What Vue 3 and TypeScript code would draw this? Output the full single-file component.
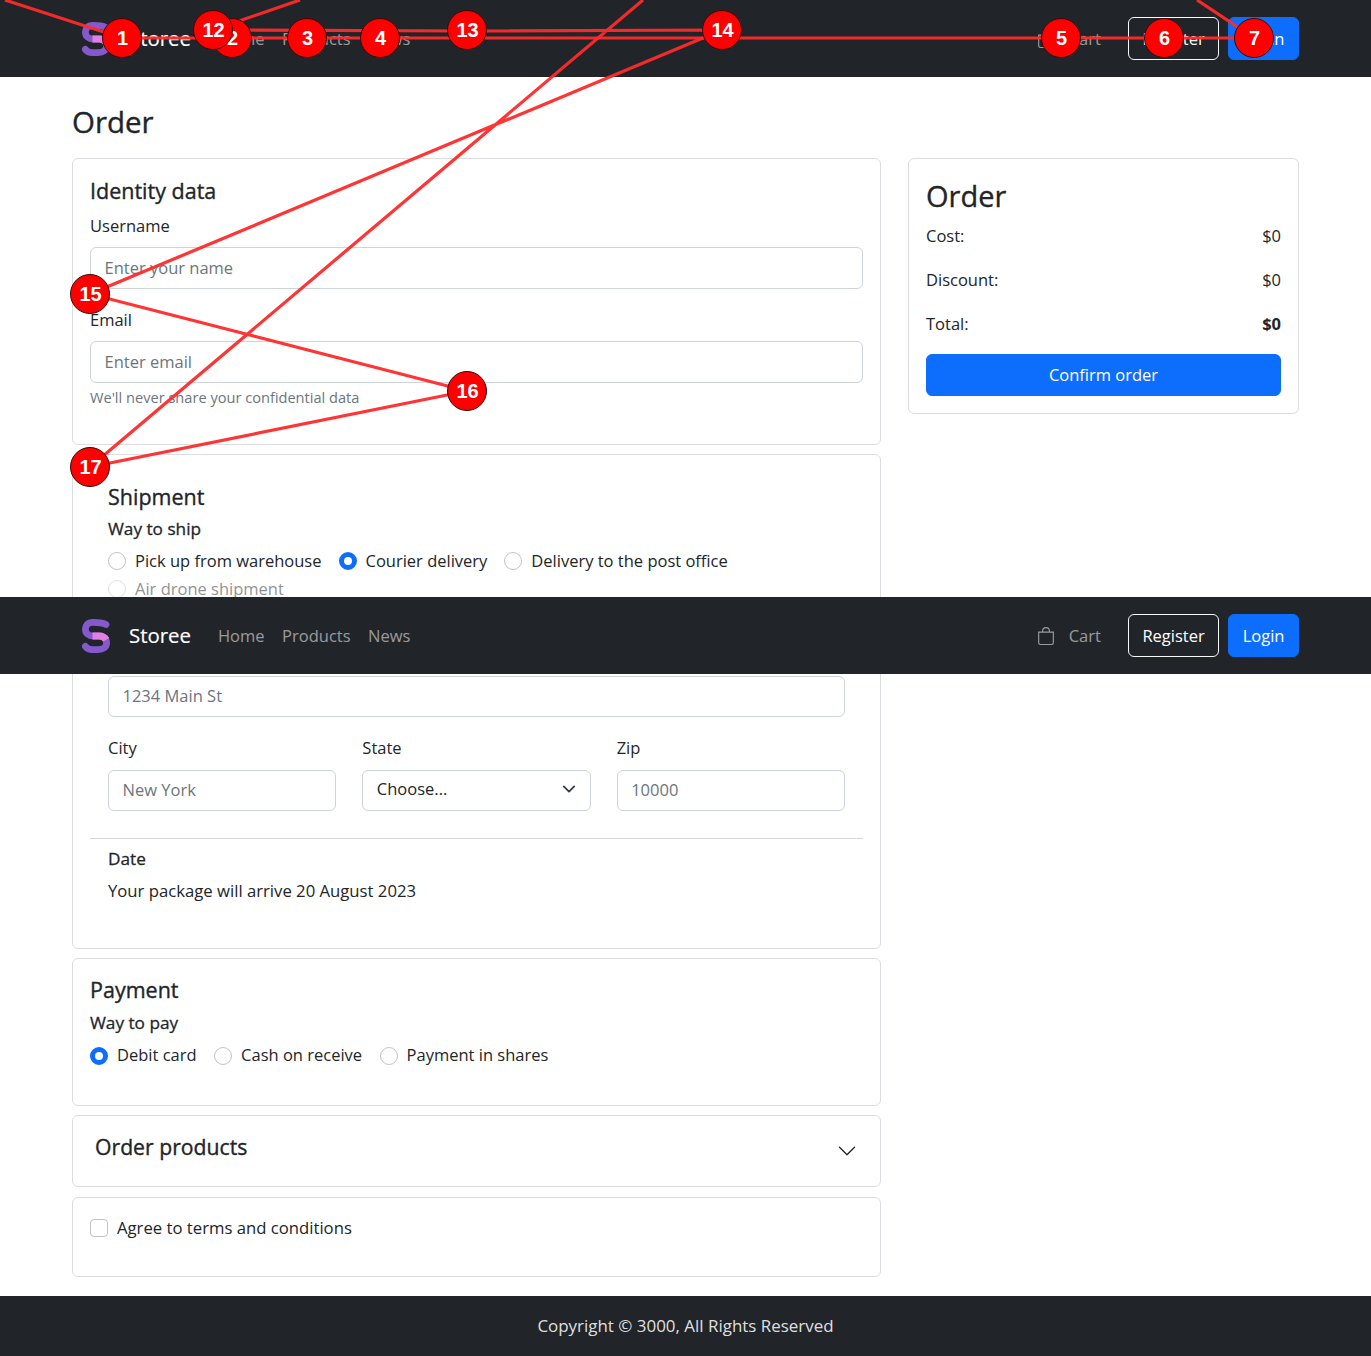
<template>
  <div class="page">
    <header v-for="bar in bars" :key="bar" class="navbar" :class="bar">
      <a class="brand">
        <svg class="logo" viewBox="0 0 28 34" width="28" height="34" fill="none" stroke-width="6.8">
          <path d="M24 5.5C20.5 3.8 16 3.4 11 3.4C5.5 3.4 3.4 7 3.4 10.2C3.4 14.5 7 17 11 17H17C22 17 24.6 20 24.6 24C24.6 28 21 30.6 16 30.6H10C7 30.6 5 29.2 3.4 27.4" stroke="#8559cc" stroke-linecap="round" />
          <path d="M10.5 17H17C20 17 22.6 18 24.2 20.8" stroke="#e17fe3" />
        </svg>
        <span>Storee</span>
      </a>
      <nav class="links">
        <a v-for="link in links" :key="link">{{ link }}</a>
      </nav>
      <a class="cart">
        <svg viewBox="0 0 16 16" width="18" height="18" fill="currentColor">
          <path d="M8 1a2.5 2.5 0 0 1 2.5 2.5V4h-5v-.5A2.5 2.5 0 0 1 8 1zm3.5 3v-.5a3.5 3.5 0 1 0-7 0V4H1v10a2 2 0 0 0 2 2h10a2 2 0 0 0 2-2V4h-3.5zM2 5h12v9a1 1 0 0 1-1 1H3a1 1 0 0 1-1-1V5z" />
        </svg>
        <span>Cart</span>
      </a>
      <button class="btn btn-outline">Register</button>
      <button class="btn btn-primary">Login</button>
    </header>

    <main class="content">
      <h1 class="page-title">Order</h1>
      <div class="columns">
        <div class="left">
          <section class="card identity">
            <h4>Identity data</h4>
            <label>Username</label>
            <input class="control" placeholder="Enter your name" />
            <label class="email-label">Email</label>
            <input class="control" placeholder="Enter email" />
            <small>We'll never share your confidential data</small>
          </section>

          <section class="card shipment">
            <div class="inset">
              <h4>Shipment</h4>
              <p class="strong">Way to ship</p>
              <div class="radios">
                <span v-for="opt in shipOptions" :key="opt.label" class="radio" :class="{ on: opt.on, off: opt.off }">
                  <i></i>{{ opt.label }}
                </span>
              </div>
              <label class="address-label">Address</label>
              <input class="control" placeholder="1234 Main St" />
              <div class="address-row">
                <div>
                  <label>City</label>
                  <input class="control" placeholder="New York" />
                </div>
                <div>
                  <label>State</label>
                  <div class="select">
                    <span>Choose...</span>
                    <svg viewBox="0 0 16 16" width="14" height="14" fill="none" stroke="#343a40" stroke-width="2" stroke-linecap="round" stroke-linejoin="round">
                      <path d="M2 5l6 6 6-6" />
                    </svg>
                  </div>
                </div>
                <div>
                  <label>Zip</label>
                  <input class="control" placeholder="10000" />
                </div>
              </div>
            </div>
            <hr />
            <div class="inset">
              <p class="strong date">Date</p>
              <p class="arrive">Your package will arrive 20 August 2023</p>
            </div>
          </section>

          <section class="card payment">
            <h4>Payment</h4>
            <p class="strong">Way to pay</p>
            <div class="radios">
              <span v-for="opt in payOptions" :key="opt.label" class="radio" :class="{ on: opt.on }">
                <i></i>{{ opt.label }}
              </span>
            </div>
          </section>

          <section class="card accordion">
            <h4>Order products</h4>
            <svg viewBox="0 0 16 16" width="20" height="20" fill="#212529">
              <path d="M1.646 4.646a.5.5 0 0 1 .708 0L8 10.293l5.646-5.647a.5.5 0 0 1 .708.708l-6 6a.5.5 0 0 1-.708 0l-6-6a.5.5 0 0 1 0-.708z" />
            </svg>
          </section>

          <section class="card terms">
            <span class="check"><i></i>Agree to terms and conditions</span>
          </section>
        </div>

        <aside class="card summary">
          <h2>Order</h2>
          <div v-for="row in totals" :key="row.label" class="sum-row" :class="{ total: row.total }">
            <span>{{ row.label }}</span>
            <b>{{ row.value }}</b>
          </div>
          <button class="btn btn-primary confirm">Confirm order</button>
        </aside>
      </div>
    </main>

    <footer class="footer">Copyright © 3000, All Rights Reserved</footer>

    <!-- annotation layer drawn over the finished page -->
    <svg class="trail" width="1371" height="1356" fill="none" stroke="#ff2a2a" stroke-width="3.2" stroke-opacity="0.95">
      <polyline v-for="(pts, i) in trails" :key="i" :points="pts" />
    </svg>
    <span
      v-for="m in markers"
      :key="m.n"
      class="marker"
      :style="{ left: m.x + 'px', top: m.y + 'px' }"
    >{{ m.n }}</span>
  </div>
</template>

<script setup lang="ts">
const bars = ['top', 'stuck']
const links = ['Home', 'Products', 'News']

const shipOptions = [
  { label: 'Pick up from warehouse' },
  { label: 'Courier delivery', on: true },
  { label: 'Delivery to the post office' },
  { label: 'Air drone shipment', off: true }
]

const payOptions = [
  { label: 'Debit card', on: true },
  { label: 'Cash on receive' },
  { label: 'Payment in shares' }
]

const totals = [
  { label: 'Cost:', value: '$0' },
  { label: 'Discount:', value: '$0' },
  { label: 'Total:', value: '$0', total: true }
]

const trails = [
  '5,0 122,38 232,38 307,38 380,38 1061,38 1164,38 1254,38 1197,0',
  '300,0 213,30 467,31 722,30 90,294 467,391 90,467 643,0'
]

const markers = [
  { n: 1, x: 122, y: 38 },
  { n: 2, x: 232, y: 38 },
  { n: 3, x: 307, y: 38 },
  { n: 4, x: 380, y: 38 },
  { n: 5, x: 1061, y: 38 },
  { n: 6, x: 1164, y: 38 },
  { n: 7, x: 1254, y: 38 },
  { n: 12, x: 213, y: 30 },
  { n: 13, x: 467, y: 30 },
  { n: 14, x: 722, y: 30 },
  { n: 15, x: 90, y: 294 },
  { n: 16, x: 467, y: 391 },
  { n: 17, x: 90, y: 467 }
]
</script>

<style>
body {
  margin: 0;
  background: #fff;
}
</style>

<style scoped>
.page {
  position: relative;
  width: 1371px;
  height: 1356px;
  overflow: hidden;
  display: flex;
  flex-direction: column;
  font-family: "Open Sans", "Noto Sans", sans-serif;
  font-size: 16.5px;
  line-height: 26.4px;
  color: #212529;
}

.navbar {
  display: flex;
  align-items: center;
  height: 77px;
  flex: none;
  box-sizing: border-box;
  padding: 0 72px 0 82px;
  background: #212529;
}
.navbar.stuck {
  position: absolute;
  top: 597px;
  left: 0;
  right: 0;
  z-index: 2;
}
.brand {
  display: flex;
  align-items: center;
  gap: 19px;
  color: #fff;
  font-size: 20.4px;
  -webkit-text-stroke: 0.2px currentColor;
}
.links {
  display: flex;
  gap: 17.5px;
  margin-left: 27px;
  flex: 1;
  padding-top: 1px;
  color: rgba(255, 255, 255, 0.55);
}
.cart {
  display: flex;
  align-items: center;
  gap: 13.5px;
  margin-right: 27px;
  padding-top: 1px;
  color: rgba(255, 255, 255, 0.55);
}

.btn {
  font: inherit;
  height: 43px;
  padding: 1px 13.5px 0;
  border-radius: 6px;
  border: 1px solid transparent;
  color: #fff;
}
.btn-outline {
  background: transparent;
  border-color: #f8f9fa;
}
.btn-primary {
  background: #0d6efd;
  border-color: #0d6efd;
  margin-left: 9px;
}

.content {
  padding: 0 72px;
  flex: 1;
}
.page-title {
  margin: 26px 0 17px;
  font-size: 29.5px;
  line-height: 38px;
  font-weight: 400;
  -webkit-text-stroke: 0.35px currentColor;
}
.columns {
  display: grid;
  grid-template-columns: 809px 391px;
  gap: 27px;
  align-items: start;
}
.left {
  display: flex;
  flex-direction: column;
  gap: 9.5px;
}

.card {
  box-sizing: border-box;
  border: 1px solid #dcdde0;
  border-radius: 6px;
  padding: 18px 17px;
  background: #fff;
}
h4 {
  margin: 0 0 8px;
  font-size: 21.5px;
  line-height: 28px;
  font-weight: 400;
  -webkit-text-stroke: 0.35px currentColor;
}
label {
  display: block;
  margin-bottom: 8px;
}
p {
  margin: 0;
}
.strong {
  font-size: 17.2px;
  -webkit-text-stroke: 0.3px currentColor;
}
.control {
  display: block;
  width: 100%;
  box-sizing: border-box;
  height: 41.5px;
  padding: 0 13.5px 2px;
  border: 1px solid #ced4da;
  border-radius: 6px;
  font: inherit;
  color: #212529;
  background: #fff;
  outline: none;
}
.control::placeholder {
  color: #6c757d;
  opacity: 1;
}
.email-label {
  margin-top: 18px;
}
small {
  display: block;
  margin-top: 4px;
  font-size: 14.6px;
  line-height: 21px;
  color: #6c757d;
}
.identity {
  height: 286.9px;
}
.identity h4 {
  margin: 0 0 8px;
}

.shipment {
  height: 494.4px;
}
.shipment h4 {
  margin: 9.5px 0 5px;
}
.inset {
  padding: 0 18px;
}
.radios {
  display: flex;
  flex-wrap: wrap;
  column-gap: 17px;
  margin-top: 5px;
}
.radio {
  display: flex;
  align-items: center;
  gap: 9px;
  height: 28px;
}
.radio i {
  box-sizing: border-box;
  width: 18px;
  height: 18px;
  border: 1px solid #bfc4c9;
  border-radius: 50%;
}
.radio.on i {
  border: 5px solid #0d6efd;
}
.radio.off {
  opacity: 0.5;
}
.address-label {
  margin-top: 38px;
}
.address-row {
  display: grid;
  grid-template-columns: repeat(3, 1fr);
  gap: 26px;
  margin-top: 18px;
}
.select {
  display: flex;
  align-items: center;
  justify-content: space-between;
  box-sizing: border-box;
  height: 41.5px;
  padding: 0 14px 2px 13.5px;
  border: 1px solid #ced4da;
  border-radius: 6px;
}
hr {
  margin: 27px 0 7px;
  border: 0;
  border-top: 1px solid #d5d6d8;
}
.arrive {
  margin-top: 5px;
  font-size: 16.7px;
}

.payment {
  height: 147.5px;
}
.payment h4 {
  margin: -1.5px 0 6.5px;
}
.payment .radios {
  column-gap: 17.5px;
}

.accordion {
  display: flex;
  align-items: center;
  justify-content: space-between;
  height: 71.8px;
  padding: 0 23px 0 22px;
}
.accordion h4 {
  margin: -8px 0 0;
  font-size: 21.2px;
}

.terms {
  height: 80.4px;
}
.check {
  display: flex;
  align-items: center;
  gap: 9px;
  margin-top: -1px;
  font-size: 16.7px;
}
.check i {
  box-sizing: border-box;
  width: 18px;
  height: 18px;
  border: 1px solid #bfc4c9;
  border-radius: 4px;
}

.summary {
  height: 256px;
}
.summary h2 {
  margin: 1px 0 9px;
  font-size: 29px;
  line-height: 36px;
  font-weight: 400;
  -webkit-text-stroke: 0.35px currentColor;
}
.sum-row {
  display: flex;
  justify-content: space-between;
  height: 44px;
}
.sum-row b {
  font-weight: 400;
}
.sum-row.total b {
  font-weight: 700;
}
.confirm {
  display: block;
  width: 100%;
  height: 42px;
  margin: -1px 0 0;
  padding: 0;
}

.footer {
  flex: none;
  height: 60.5px;
  background: #212529;
  color: rgba(255, 255, 255, 0.87);
  font-size: 16.95px;
  display: flex;
  align-items: center;
  justify-content: center;
}

.trail {
  position: absolute;
  top: 0;
  left: 0;
  z-index: 3;
  pointer-events: none;
}
.marker {
  position: absolute;
  z-index: 4;
  box-sizing: border-box;
  width: 40px;
  height: 40px;
  margin: -20px 0 0 -20px;
  padding-left: 1px;
  display: flex;
  align-items: center;
  justify-content: center;
  border-radius: 50%;
  border: 1px solid #3a0a0a;
  background: #ff0000;
  color: #fff;
  font-family: "Liberation Sans", Arial, sans-serif;
  font-size: 20px;
  font-weight: 700;
  line-height: 1;
}
</style>
